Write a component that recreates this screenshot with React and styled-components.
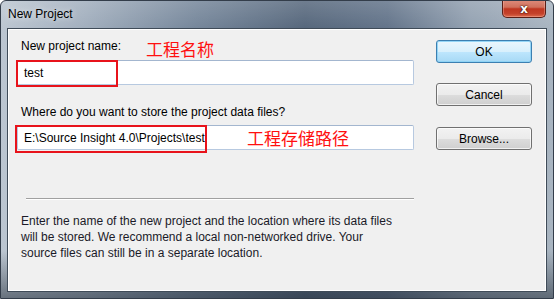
import React from "react";
import styled, { createGlobalStyle } from "styled-components";

const GlobalStyle = createGlobalStyle`
  html, body {
    margin: 0;
    padding: 0;
    background: #ffffff;
  }
  body {
    font-family: "Liberation Sans", Arial, sans-serif;
    font-size: 12px;
    color: #000;
  }
`;

const Window = styled.div`
  width: 554px;
  height: 299px;
  box-sizing: border-box;
  display: flex;
  flex-direction: column;
  border: 1px solid #333d4a;
  border-radius: 6px 6px 0 0;
  background:
    linear-gradient(to bottom, rgba(255, 255, 255, 0.15) 0px, rgba(255, 255, 255, 0) 28px, rgba(0, 0, 0, 0) 250px, rgba(30, 40, 52, 0.55) 299px),
    linear-gradient(
      to right,
      #bcc6d1 0%,
      #a2afbe 15%,
      #76879b 35%,
      #56677c 55%,
      #63748a 70%,
      #93a1b1 85%,
      #a9b5c1 100%
    );
  overflow: hidden;
`;

const TitleBar = styled.div`
  height: 27px;
  display: flex;
  align-items: flex-start;
  padding-left: 7px;
`;

const Title = styled.span`
  line-height: 27px;
  font-size: 12px;
  color: #000;
  text-shadow: 0 0 6px rgba(255, 255, 255, 0.8);
`;

const CloseButton = styled.div`
  margin-left: auto;
  margin-right: 7px;
  margin-top: -1px;
  width: 44px;
  height: 18px;
  box-sizing: border-box;
  border: 1px solid #5a1e16;
  border-top: none;
  border-radius: 0 0 5px 5px;
  background: linear-gradient(
    to bottom,
    #de8c7b 0%,
    #d0705c 42%,
    #bf3620 52%,
    #c4412a 80%,
    #dd6a4c 100%
  );
  box-shadow: inset 0 0 0 1px rgba(255, 200, 190, 0.35);
  display: flex;
  align-items: center;
  justify-content: center;
  color: #fff;
  font-family: "DejaVu Sans", sans-serif;
  font-weight: bold;
  font-size: 12px;
  line-height: 1;
  text-shadow: 0 0 2px #2a0f0a, 0 0 1px #2a0f0a;
`;

const Client = styled.div`
  flex: 1;
  margin: 0 6px 6px 6px;
  border: 1px solid #3f4b58;
  box-shadow: inset 0 0 0 1px #ffffff;
  background: #f0f0f0;
  display: flex;
  padding: 10px 0 0 9px;
`;

const FormColumn = styled.div`
  width: 397px;
  display: flex;
  flex-direction: column;
`;

const LabelRow = styled.div`
  display: flex;
  align-items: center;
  height: 15px;
  padding-left: 4px;
  margin-top: ${(p) => p.$top || 0}px;
  margin-bottom: ${(p) => p.$bottom || 0}px;
`;

const Label = styled.span`
  font-size: 12px;
  line-height: 15px;
  white-space: nowrap;
`;

const Note = styled.span`
  font-family: "Noto Sans CJK SC", "Liberation Sans", sans-serif;
  font-size: 17px;
  line-height: 17px;
  color: #ff1010;
  white-space: nowrap;
`;

const InlineNote = styled(Note)`
  margin-left: 25px;
  margin-top: 3px;
`;

const OverNote = styled(Note)`
  position: absolute;
  left: 229px;
  top: 3px;
`;

const Field = styled.div`
  position: relative;
  height: 25px;
  box-sizing: border-box;
  border: 1px solid #b7c9e0;
  border-top-color: #a3b6cf;
  border-radius: 2px;
  background: #fff;
  display: flex;
  align-items: center;
  padding-left: 6px;
  font-size: 12px;
  white-space: nowrap;
`;

const Marker = styled.div`
  position: absolute;
  left: ${(p) => p.$left}px;
  top: ${(p) => p.$top}px;
  width: ${(p) => p.$width}px;
  height: ${(p) => p.$height}px;
  box-sizing: border-box;
  border: 2px solid #e8131b;
`;

const Separator = styled.div`
  margin: 48px 0 0 9px;
  height: 0;
  border-top: 1px solid #a0a0a0;
  border-bottom: 1px solid #ffffff;
`;

const Help = styled.p`
  margin: 13px 0 0 4px;
  font-size: 12px;
  line-height: 16px;
  color: #1a1a28;
  white-space: nowrap;
`;

const ButtonColumn = styled.div`
  margin-left: 22px;
  width: 96px;
  display: flex;
  flex-direction: column;
  padding-top: 1px;
`;

const Button = styled.div`
  height: 23px;
  box-sizing: border-box;
  margin-bottom: ${(p) => p.$gap || 0}px;
  border: 1px solid ${(p) => (p.$primary ? "#3c7fb1" : "#707070")};
  border-radius: 3px;
  background: ${(p) =>
    p.$primary
      ? "linear-gradient(to bottom, #eaf6fd 0%, #d9f0fc 50%, #bee6fd 51%, #a7d9f5 100%)"
      : "linear-gradient(to bottom, #f2f2f2 0%, #ebebeb 50%, #dddddd 51%, #cfcfcf 100%)"};
  box-shadow: inset 0 0 0 1px
    ${(p) => (p.$primary ? "rgba(140, 210, 245, 0.9)" : "rgba(255, 255, 255, 0.7)")};
  display: flex;
  align-items: center;
  justify-content: center;
  font-size: 12px;
  color: #000;
`;

export default function App() {
  return (
    <>
      <GlobalStyle />
      <Window>
        <TitleBar>
          <Title>New Project</Title>
          <CloseButton>x</CloseButton>
        </TitleBar>
        <Client>
          <FormColumn>
            <LabelRow $bottom={6}>
              <Label>New project name:</Label>
              <InlineNote>工程名称</InlineNote>
            </LabelRow>
            <Field>
              test
              <Marker $left={-2} $top={-1} $width={102} $height={27} />
            </Field>
            <LabelRow $top={20} $bottom={5}>
              <Label>Where do you want to store the project data files?</Label>
            </LabelRow>
            <Field>
              E:\Source Insight 4.0\Projects\test
              <Marker $left={-3} $top={-1} $width={192} $height={28} />
              <OverNote>工程存储路径</OverNote>
            </Field>
            <Separator />
            <Help>
              Enter the name of the new project and the location where its data files
              <br />
              will be stored. We recommend a local non-networked drive. Your
              <br />
              source files can still be in a separate location.
            </Help>
          </FormColumn>
          <ButtonColumn>
            <Button $primary $gap={20}>OK</Button>
            <Button $gap={21}>Cancel</Button>
            <Button>Browse...</Button>
          </ButtonColumn>
        </Client>
      </Window>
    </>
  );
}
